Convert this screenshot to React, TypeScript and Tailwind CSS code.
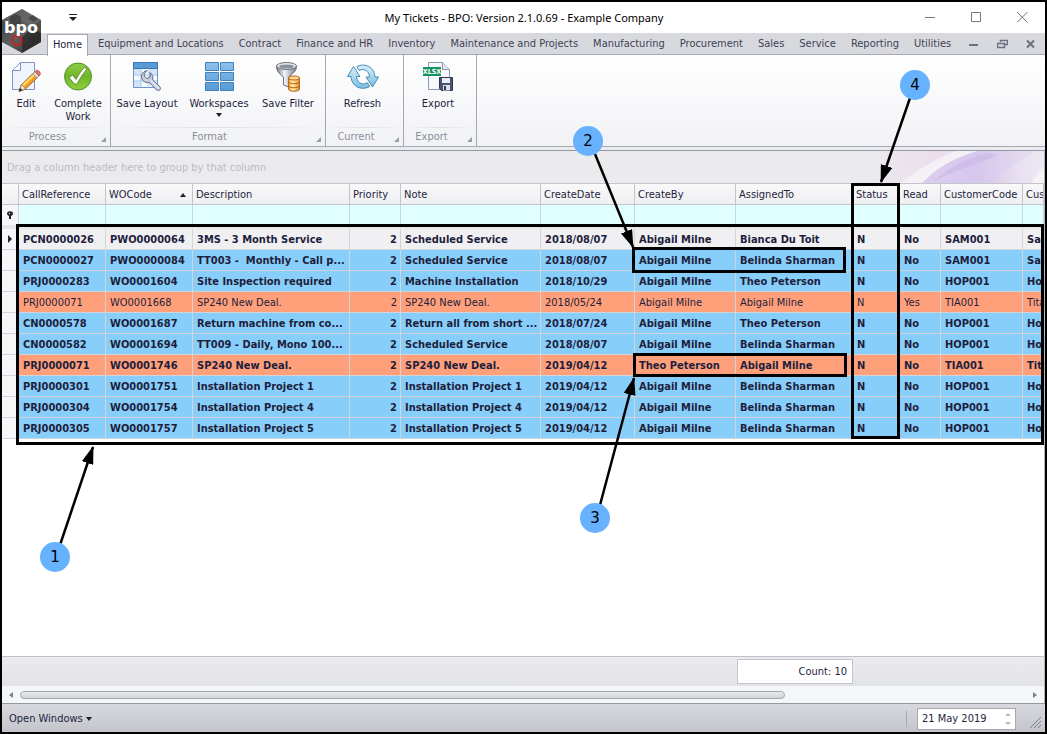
import React from 'react';

const menu = [
  'Equipment and Locations', 'Contract', 'Finance and HR', 'Inventory', 'Maintenance and Projects',
  'Manufacturing', 'Procurement', 'Sales', 'Service', 'Reporting', 'Utilities',
];

const columns = [
  { name: 'CallReference', width: 'w-[87px]' },
  { name: 'WOCode', width: 'w-[87px]' },
  { name: 'Description', width: 'w-[157px]' },
  { name: 'Priority', width: 'w-[51px]' },
  { name: 'Note', width: 'w-[140px]' },
  { name: 'CreateDate', width: 'w-[94px]' },
  { name: 'CreateBy', width: 'w-[101px]' },
  { name: 'AssignedTo', width: 'w-[117px]' },
  { name: 'Status', width: 'w-[47px]' },
  { name: 'Read', width: 'w-[41px]' },
  { name: 'CustomerCode', width: 'w-[82px]' },
  { name: 'Cus', width: 'w-auto' },
];

const blue = 'bg-[#87cefa]';
const orange = 'bg-[#ffa07a]';

const tickets = [
  { tone: 'bg-[#f0f0f3]', cells: ['PCN0000026', 'PWO0000064', '3MS - 3 Month Service', '2', 'Scheduled Service', '2018/08/07', 'Abigail Milne', 'Bianca Du Toit', 'N', 'No', 'SAM001', 'Sa'] },
  { tone: blue, cells: ['PCN0000027', 'PWO0000084', 'TT003 -  Monthly - Call p...', '2', 'Scheduled Service', '2018/08/07', 'Abigail Milne', 'Belinda Sharman', 'N', 'No', 'SAM001', 'Sa'] },
  { tone: blue, cells: ['PRJ0000283', 'WO0001604', 'Site Inspection required', '2', 'Machine Installation', '2018/10/29', 'Abigail Milne', 'Theo Peterson', 'N', 'No', 'HOP001', 'Ho'] },
  { tone: orange, cells: ['PRJ0000071', 'WO0001668', 'SP240 New Deal.', '2', 'SP240 New Deal.', '2018/05/24', 'Abigail Milne', 'Abigail Milne', 'N', 'Yes', 'TIA001', 'Tita'] },
  { tone: blue, cells: ['CN0000578', 'WO0001687', 'Return machine from co...', '2', 'Return all from short ...', '2018/07/24', 'Abigail Milne', 'Theo Peterson', 'N', 'No', 'HOP001', 'Ho'] },
  { tone: blue, cells: ['CN0000582', 'WO0001694', 'TT009 - Daily, Mono 100...', '2', 'Scheduled Service', '2018/08/07', 'Abigail Milne', 'Belinda Sharman', 'N', 'No', 'HOP001', 'Ho'] },
  { tone: orange, cells: ['PRJ0000071', 'WO0001746', 'SP240 New Deal.', '2', 'SP240 New Deal.', '2019/04/12', 'Theo Peterson', 'Abigail Milne', 'N', 'No', 'TIA001', 'Tit'] },
  { tone: blue, cells: ['PRJ0000301', 'WO0001751', 'Installation Project 1', '2', 'Installation Project 1', '2019/04/12', 'Abigail Milne', 'Belinda Sharman', 'N', 'No', 'HOP001', 'Ho'] },
  { tone: blue, cells: ['PRJ0000304', 'WO0001754', 'Installation Project 4', '2', 'Installation Project 4', '2019/04/12', 'Abigail Milne', 'Belinda Sharman', 'N', 'No', 'HOP001', 'Ho'] },
  { tone: blue, cells: ['PRJ0000305', 'WO0001757', 'Installation Project 5', '2', 'Installation Project 5', '2019/04/12', 'Abigail Milne', 'Belinda Sharman', 'N', 'No', 'HOP001', 'Ho'] },
];

function Logo() {
  return (
    <div className="absolute top-[7px] left-0 h-11 w-10">
      <svg viewBox="0 0 40 44" className="h-11 w-10" aria-hidden="true">
        <defs>
          <linearGradient id="hex" x1="0" y1="0" x2="1" y2="1">
            <stop offset="0" stopColor="#3c3c3c" />
            <stop offset=".5" stopColor="#5e5e5e" />
            <stop offset="1" stopColor="#2c2c2c" />
          </linearGradient>
        </defs>
        <path d="M20 0 39 11V33L20 44 0 33V11Z" fill="url(#hex)" />
        <path d="M20 0 39 11 28 17 20 12 9 17 0 11Z" fill="#777" opacity=".45" />
        <path d="M20 44 39 33V24l-9-4-10 8Z" fill="#222" opacity=".6" />
        <path d="M8 8l6-3 5 3v6l-5 3-6-3ZM27 31l5-3 5 3-5 4ZM26 9l5-3 5 4-5 3Z" fill="#2b2b2b" opacity=".55" />
        <path d="M10 31.500l2.500-4.500h5l2.500 4.500-2.500 4.500h-5Z" fill="none" stroke="#e3141c" strokeWidth="1.500" />
      </svg>
      <span className="absolute top-[11px] left-[2px] font-['DejaVu_Sans'] text-[16px] leading-[16px] font-bold text-white">bpo</span>
    </div>
  );
}

function EditIcon() {
  return (
    <svg viewBox="0 0 32 32" className="h-8 w-8" aria-hidden="true">
      <path d="M10.500 1.500H24.500V28.500H2.500V9.500Z" fill="#eff4fd" stroke="#7c93c4" />
      <path d="M10.500 1.500V9.500H2.500Z" fill="#fff" stroke="#7c93c4" />
      <path d="M9 30.500l2.500-7L24.500 11l4 4.500L15.500 28Z" fill="#f59b23" stroke="#8b5a1c" strokeWidth=".8" />
      <path d="M12 23.500 25 11.500l1.500 1.700L13.500 25.500Z" fill="#ffd56f" />
      <path d="M9 30.500l2-6.500c2 0 4 2 4.500 4Z" fill="#f5dfb8" stroke="#80664c" strokeWidth=".7" />
      <path d="M9 30.500l1-3.500 2.500 2.300Z" fill="#222" />
      <path d="m23 12.500 2-2 4 4.500-2 2Z" fill="#dfe2e8" stroke="#77797f" strokeWidth=".6" />
      <path d="m25 10.500 1.300-1.200c2-.6 4.500 2 4 4l-1.300 1.700Z" fill="#e2746c" stroke="#9e332c" strokeWidth=".6" />
    </svg>
  );
}

function CompleteIcon() {
  return (
    <svg viewBox="0 0 32 32" className="h-8 w-8" aria-hidden="true">
      <defs>
        <linearGradient id="green" x1="0" y1="0" x2="0" y2="1">
          <stop offset="0" stopColor="#8fce45" />
          <stop offset=".5" stopColor="#6fb52c" />
          <stop offset="1" stopColor="#93d03c" />
        </linearGradient>
      </defs>
      <circle cx="16" cy="15.500" r="13.500" fill="url(#green)" stroke="#4f8f22" />
      <path d="M7 16.500l3.500-2.500 3.500 4.500c2.500-5 5.500-9 8.500-12l2.500 1.300C21.500 12 18 17.500 15 23h-2.500Z" fill="#fff" stroke="#4b831e" strokeWidth=".8" />
    </svg>
  );
}

function LayoutIcon() {
  return (
    <svg viewBox="0 0 32 32" className="h-8 w-8" aria-hidden="true">
      <path d="M2.500 1.500H26.500V26.500H2.500Z" fill="#f4f9fe" stroke="#6d93c6" />
      <path d="M2.500 1.500H26.500V7.500H2.500Z" fill="#5b9ad8" stroke="#3772b5" />
      <path d="M10 7.500V26.500M18 7.500V26.500M3 14H26M3 20H26" stroke="#a3c1e4" />
      <path d="M3 8H10V14H3ZM18 8h8v6h-8ZM3 20h7v6H3Z" fill="#c4dcf4" opacity=".7" />
      <path d="M16 9.500c-5 1-7 6-4.500 9.500 2 2.500 4.500 3 7 2.500l7 7.500c3 1.500 5-.8 3.500-3.200l-7.500-6.800c1-3-.1-5.500-2.500-7.500l.3 4.500-3.300 1.500-2.800-2.500c0-2.500 1-3.700 2.800-5.500Z" fill="#c6cfdf" stroke="#5f6c88" />
      <path d="m20 19.500 7.500 7.500" stroke="#eef2f8" strokeWidth="1.300" />
    </svg>
  );
}

function WorkspacesIcon() {
  return (
    <svg viewBox="0 0 32 32" className="h-8 w-8" aria-hidden="true">
      <defs>
        <linearGradient id="tile" x1="0" y1="0" x2="0" y2="1">
          <stop offset="0" stopColor="#8fc1ea" />
          <stop offset="1" stopColor="#569ad6" />
        </linearGradient>
      </defs>
      <g fill="url(#tile)" stroke="#3f82c0">
        <path d="M2.500 1.500h13v8h-13ZM17.500 1.500h13v8h-13ZM2.500 11.500h13v8h-13ZM17.500 11.500h13v8h-13ZM2.500 21.500h13v8h-13ZM17.500 21.500h13v8h-13Z" />
      </g>
    </svg>
  );
}

function FilterIcon() {
  return (
    <svg viewBox="0 0 32 32" className="h-8 w-8" aria-hidden="true">
      <defs>
        <linearGradient id="metal">
          <stop offset="0" stopColor="#727a85" />
          <stop offset=".4" stopColor="#f2f4f7" />
          <stop offset="1" stopColor="#707883" />
        </linearGradient>
        <linearGradient id="gold">
          <stop offset="0" stopColor="#f5a436" />
          <stop offset=".4" stopColor="#fff0b8" />
          <stop offset="1" stopColor="#e08422" />
        </linearGradient>
      </defs>
      <path d="M4.500 5c0 5 2 7 7 11v8l5 2V16c5-4 8-6 8-11Z" fill="url(#metal)" stroke="#69717b" />
      <ellipse cx="14.500" cy="5" rx="10" ry="3.500" fill="#e4e8ed" stroke="#69717b" />
      <ellipse cx="14.500" cy="5.500" rx="7.500" ry="2" fill="#88919d" />
      <path d="M16.500 17v11c0 3 11 3 11 0V17Z" fill="url(#gold)" stroke="#b86514" />
      <ellipse cx="22" cy="17" rx="5.500" ry="2" fill="#ffdb91" stroke="#b86514" />
      <path d="M16.500 21c1 2.300 10 2.300 11 0M16.500 25c1 2.300 10 2.300 11 0" fill="none" stroke="#b86514" />
    </svg>
  );
}

function RefreshIcon() {
  return (
    <svg viewBox="0 0 32 32" className="h-8 w-8" aria-hidden="true">
      <defs>
        <linearGradient id="aqua" x1="0" y1="0" x2="0" y2="1">
          <stop offset="0" stopColor="#d7f1fc" />
          <stop offset="1" stopColor="#79bde4" />
        </linearGradient>
      </defs>
      <g fill="url(#aqua)" stroke="#427fae" strokeLinejoin="round" strokeWidth=".9">
        <path d="M.500 15.500 6.500 5.500 13 15.500H9.500c.3 4.500 3 7.500 7.500 7.500l3.500-1.300 2 4C14 30 4.500 25.500 4 15.500Z" />
        <path d="M31.500 16 25.500 26 19 16H22.500c-.3-4.500-3-7.500-7.500-7.500l-3 1-2-4C18 1.500 27.500 6 28 16Z" />
      </g>
    </svg>
  );
}

function ExportIcon() {
  return (
    <svg viewBox="0 0 32 32" className="h-8 w-8" aria-hidden="true">
      <path d="M6.500 1.500H20.500L27.500 8.500V28.500H6.500Z" fill="#f7f9fd" stroke="#8b98b2" />
      <path d="M20.500 1.500V8.500H27.500" fill="#dee6f2" stroke="#8b98b2" />
      <path d="M1 6H19V15H1Z" fill="#149360" />
      <text x="10" y="13" textAnchor="middle" fontSize="7" fontWeight="700" fontFamily="DejaVu Sans Condensed, sans-serif" fill="#fff">XLSX</text>
      <path d="M17.500 16.500H30.500V29.500H19.500L17.500 27.500Z" fill="#48546f" stroke="#2e3850" />
      <path d="M20 17h8v5h-8Z" fill="#e9edf4" />
      <path d="M21 24h7v5.500h-7Z" fill="#dbe0e9" />
      <path d="M22 25h2v4h-2Z" fill="#303a52" />
    </svg>
  );
}

function ToolButton({ icon, label, width, arrow }: { icon: React.ReactNode; label: string; width: string; arrow?: boolean }) {
  return (
    <button className={`flex flex-col items-center text-center leading-[13px] text-[#1e1e3c] ${width}`}>
      {icon}
      <span className="mt-1">{label}</span>
      {arrow && <span className="mt-[3px] border-x-[3px] border-t-4 border-x-transparent border-t-[#1e1e2c]" />}
    </button>
  );
}

function Group({ caption, width, children }: { caption: string; width: string; children: React.ReactNode }) {
  return (
    <section className={`flex flex-col border-r border-[#a5a8b0] ${width}`}>
      <div className="flex flex-1 items-start justify-center pt-[6px] pr-1">{children}</div>
      <div className="flex h-[19px] items-center bg-linear-to-r from-transparent via-[#dfe0e4] to-transparent bg-[length:100%_1px] bg-no-repeat pt-px text-[#8c8f9a]">
        <span className="flex-1 pr-2 text-center">{caption}</span>
        <svg viewBox="0 0 5 5" className="mt-1 mr-1 h-[5px] w-[5px]" aria-hidden="true">
          <path d="M5 0V5H0Z" fill="#9a9da6" />
        </svg>
      </div>
    </section>
  );
}

function Ribbon() {
  return (
    <div className="flex h-[92px] shrink-0 border-b border-[#a5a8b0] bg-linear-to-b from-white to-[#f1f2f5]">
      <Group caption="Process" width="w-[109px]">
        <ToolButton icon={<EditIcon />} label="Edit" width="w-12" />
        <ToolButton icon={<CompleteIcon />} label="Complete Work" width="w-14" />
      </Group>
      <Group caption="Format" width="w-[215px]">
        <ToolButton icon={<LayoutIcon />} label="Save Layout" width="w-[70px]" />
        <ToolButton icon={<WorkspacesIcon />} label="Workspaces" width="w-[74px]" arrow />
        <ToolButton icon={<FilterIcon />} label="Save Filter" width="w-[64px]" />
      </Group>
      <Group caption="Current" width="w-[78px]">
        <ToolButton icon={<RefreshIcon />} label="Refresh" width="w-14" />
      </Group>
      <Group caption="Export" width="w-[73px]">
        <ToolButton icon={<ExportIcon />} label="Export" width="w-14" />
      </Group>
    </div>
  );
}

function Swirl() {
  return (
    <svg viewBox="0 0 180 32" className="h-8 w-[180px]" aria-hidden="true">
      <defs>
        <linearGradient id="pink">
          <stop offset="0" stopColor="#ebebee" />
          <stop offset=".5" stopColor="#ebe2ec" />
          <stop offset="1" stopColor="#eddcee" />
        </linearGradient>
        <linearGradient id="violet">
          <stop offset="0" stopColor="#dccdf0" />
          <stop offset=".5" stopColor="#d6c8ed" />
          <stop offset="1" stopColor="#e6dff0" />
        </linearGradient>
        <linearGradient id="lilac">
          <stop offset="0" stopColor="#dccbea" />
          <stop offset=".5" stopColor="#e8e0f0" />
          <stop offset="1" stopColor="#ece9f1" />
        </linearGradient>
      </defs>
      <path d="M0 0H92C72 7 56 18 36 32H0Z" fill="url(#pink)" />
      <path d="M92 0C72 7 56 18 36 32H58C72 18 88 7 114 0Z" fill="#f3f1f6" />
      <path d="M114 0C88 7 72 18 58 32H128C140 22 154 10 172 0Z" fill="url(#violet)" />
      <path d="M124 2C98 8 84 18 70 30C88 20 112 14 134 4Z" fill="#c9b5e8" opacity=".6" />
      <path d="M172 0C154 10 140 22 128 32H168C172 24 176 20 180 16V0Z" fill="url(#lilac)" />
      <path d="M180 16C176 20 172 24 168 32H180Z" fill="#f6f3f8" />
    </svg>
  );
}

function Grid() {
  const cell = 'overflow-hidden border-r border-b border-[#d3d4da] pt-px pb-0 whitespace-pre';
  return (
    <table className="w-full table-fixed border-separate border-spacing-0 text-[#1e1e3c]">
      <colgroup>
        <col className="w-[17px]" />
        {columns.map((c) => <col key={c.name} className={c.width} />)}
      </colgroup>
      <thead>
        <tr className="h-[22px] bg-linear-to-b from-[#f9f9fa] to-[#eeeff2]">
          <td className="border-y border-r border-[#c3c5cc] p-0" />
          {columns.map((c) => (
            <th key={c.name} scope="col" className="overflow-hidden border-y border-r border-[#c3c5cc] p-0 pt-px text-left font-normal">
              <span className="flex items-center justify-between pr-[6px] pl-[3px]">
                {c.name}
                {c.name === 'WOCode' && <span className="border-x-[3px] border-b-4 border-x-transparent border-b-[#1e1e2c]" />}
              </span>
            </th>
          ))}
        </tr>
        <tr className="h-5">
          <td className="border-r border-[#d3d4da] bg-[#f5f6f8] p-0">
            <svg viewBox="0 0 6 8" className="mx-auto h-2 w-[6px]" aria-hidden="true">
              <path d="M0 2.500C0-.500 6-.500 6 2.500 6 4 4.500 5 4 5V8H2V5C1.500 5 0 4 0 2.500Z" fill="#22222e" />
              <path d="M2 2h1v1H2Z" fill="#fff" />
            </svg>
          </td>
          {columns.map((c) => (
            <td key={c.name} className="border-r border-[#cbd5dc] bg-[#e0ffff] p-0">
              <input aria-label={`Filter ${c.name}`} className="block h-[19px] w-full bg-transparent px-1 outline-none" />
            </td>
          ))}
        </tr>
        <tr className="h-1"><td colSpan={13} className="bg-[#e4e5e9] p-0" /></tr>
      </thead>
      <tbody>
        {tickets.map((t, i) => (
          <tr key={t.cells[1]} className={`h-[21px] ${t.cells[9] === 'No' ? 'font-bold' : ''}`}>
            <td className="border-r border-b border-[#d3d4da] bg-[#f5f6f8] p-0">
              {i === 0 && <span className="mx-auto block w-1 border-y-4 border-l-4 border-y-transparent border-l-[#22222e]" />}
            </td>
            {t.cells.map((value, j) => (
              <td key={j} className={`${cell} ${t.tone} ${j === 3 ? 'pr-[3px] text-right' : 'pl-1'}`}>{value}</td>
            ))}
          </tr>
        ))}
      </tbody>
    </table>
  );
}

const callouts = [
  { n: 1, place: 'left-10 top-[542px]' },
  { n: 2, place: 'left-[573px] top-[126px]' },
  { n: 3, place: 'left-[580px] top-[503px]' },
  { n: 4, place: 'left-[900px] top-[70px]' },
];

function Annotations() {
  return (
    <div className="pointer-events-none absolute -inset-[2px] overflow-hidden">
      <svg className="absolute inset-0 h-full w-full" aria-hidden="true">
        <defs>
          <marker id="head" markerUnits="userSpaceOnUse" markerWidth="18" markerHeight="12" refX="17" refY="6" orient="auto">
            <path d="M0 0 18 6 0 12Z" />
          </marker>
        </defs>
        <g stroke="#000" strokeWidth="2.500">
          <path d="M60 545 93 447" markerEnd="url(#head)" />
          <path d="M595 154 633 247" markerEnd="url(#head)" />
          <path d="M600 505 634 378" markerEnd="url(#head)" />
          <path d="M910 98 881 182" markerEnd="url(#head)" />
        </g>
      </svg>
      <div className="absolute top-[224px] right-[3px] left-4 h-[221px] border-3 border-black" />
      <div className="absolute top-[247px] left-[632px] h-[26px] w-[214px] border-3 border-black" />
      <div className="absolute top-[353px] left-[633px] h-6 w-[214px] border-3 border-black" />
      <div className="absolute top-[183px] left-[851px] h-64 w-[49px] border-3 border-black" />
      {callouts.map((c) => (
        <span key={c.n} className={`absolute flex h-[30px] w-[30px] items-center justify-center rounded-full bg-[#66b2ff] font-['DejaVu_Sans'] text-[15px] text-black ${c.place}`}>
          {c.n}
        </span>
      ))}
    </div>
  );
}

export default function App() {
  return (
    <div className="relative flex min-h-screen flex-col border-2 border-black bg-white font-['DejaVu_Sans_Condensed','DejaVu_Sans',sans-serif] text-[11px] leading-[14px] text-[#1e1e3c]">
      <header className="relative shrink-0">
        <div className="flex h-[31px] items-center">
          <button aria-label="Customize toolbar" className="ml-[67px] flex w-2 flex-col items-center gap-[2px]">
            <span className="h-px w-2 bg-[#1e1e2c]" />
            <span className="border-x-4 border-t-4 border-x-transparent border-t-[#1e1e2c]" />
          </button>
          <h1 className="flex-1 pl-[46px] text-center font-['Noto_Sans'] text-[11px] text-black">My Tickets - BPO: Version 2.1.0.69 - Example Company</h1>
          <div className="flex items-center gap-[35px] pr-[17px]">
            <button aria-label="Minimize"><svg className="h-[11px] w-[11px]" aria-hidden="true"><path d="M0 5.500H10" stroke="#777" /></svg></button>
            <button aria-label="Maximize"><svg className="h-[11px] w-[11px]" aria-hidden="true"><path d="M.500.500H9.500V9.500H.500Z" fill="none" stroke="#777" /></svg></button>
            <button aria-label="Close"><svg className="h-[11px] w-[11px]" aria-hidden="true"><path d="M0 0 10.500 10.500M10.500 0 0 10.500" stroke="#777" /></svg></button>
          </div>
        </div>
        <nav className="flex h-[22px] items-center border-b border-[#a5a8b0] bg-[#d8d9df] pt-px text-[#3f4254]">
          <a href="#home" className="-mb-px ml-[45px] flex h-[22px] w-[41px] items-center justify-center border border-b-0 border-[#a5a8b0] bg-white text-[#1e1e3c]">Home</a>
          <div className="ml-[10px] flex flex-1 gap-[15px] whitespace-nowrap">
            {menu.map((m) => <a key={m} href="#menu">{m}</a>)}
          </div>
          <div className="flex items-center gap-[18px] pr-[9px]">
            <button aria-label="Minimize child"><svg className="h-[10px] w-[10px]" aria-hidden="true"><path d="M0 6H9" stroke="#6c6f7d" strokeWidth="2" /></svg></button>
            <button aria-label="Restore child"><svg className="h-[10px] w-[11px]" aria-hidden="true"><path d="M3.500 3V1.500H10.500V5.500H8M.500 4.500H7.500V8.500H.500Z" fill="none" stroke="#6c6f7d" strokeWidth="1.500" /></svg></button>
            <button aria-label="Close child"><svg className="h-[10px] w-[10px]" aria-hidden="true"><path d="M1 1.500 8 8.500M8 1.500 1 8.500" stroke="#6c6f7d" strokeWidth="2" /></svg></button>
          </div>
        </nav>
        <Logo />
      </header>
      <Ribbon />
      <div className="h-1 shrink-0 border-b border-[#9598a2] bg-[#ebecef]" />
      <main className="flex flex-1 flex-col border-r border-[#b5b7be]">
        <div className="flex h-8 items-center justify-between overflow-hidden bg-[#ebebee] pl-[5px] text-[#b9bbc4]">
          <span className="pt-[2px]">Drag a column header here to group by that column</span>
          <Swirl />
        </div>
        <Grid />
        <div className="flex-1 bg-white" />
        <div className="flex h-[30px] shrink-0 border-t border-[#bfc1c8] bg-linear-to-b from-[#ebebee] to-[#e2e3e7] pt-[2px]">
          <div className="ml-[735px] flex h-[25px] w-[116px] items-center justify-end border border-[#c3c5cc] bg-white pt-px pr-[5px]">Count: 10</div>
        </div>
        <div className="flex h-[17px] shrink-0 items-center bg-[#f5f6f8]">
          <button aria-label="Scroll left" className="flex w-[18px] justify-center"><span className="border-y-[3px] border-r-4 border-y-transparent border-r-[#7c7f8b]" /></button>
          <div className="flex-1"><div className="h-2 w-[76%] rounded-full border border-[#a5a8b0] bg-linear-to-b from-[#e9eaed] to-[#d2d4d9]" /></div>
          <button aria-label="Scroll right" className="flex w-[18px] justify-center"><span className="border-y-[3px] border-l-4 border-y-transparent border-l-[#7c7f8b]" /></button>
        </div>
      </main>
      <footer className="flex h-[29px] shrink-0 items-center border-t border-[#9598a2] bg-linear-to-b from-[#d8d9de] to-[#c3c5cb] pt-px">
        <button className="ml-[7px] flex items-center gap-[3px]">
          Open Windows
          <span className="border-x-[3px] border-t-4 border-x-transparent border-t-[#1e1e2c]" />
        </button>
        <div className="flex-1" />
        <span className="h-4 w-px bg-[#a5a8b0]" />
        <div className="mr-[14px] ml-[10px] flex h-[22px] w-[99px] items-center border border-[#a5a8b0] bg-white pr-1">
          <input aria-label="Date" defaultValue="21 May 2019" className="w-full min-w-0 bg-transparent pl-1 outline-none" />
          <span className="flex flex-col gap-[6px]">
            <button aria-label="Next day" className="border-x-[3px] border-b-[3px] border-x-transparent border-b-[#b9bbc4]" />
            <button aria-label="Previous day" className="border-x-[3px] border-t-[3px] border-x-transparent border-t-[#b9bbc4]" />
          </span>
        </div>
        <svg className="mt-2 mr-1 h-[11px] w-[11px]" aria-hidden="true"><path d="M0 11 11 0M4 11 11 4M8 11 11 8" stroke="#7c7f8b" /></svg>
      </footer>
      <Annotations />
    </div>
  );
}
